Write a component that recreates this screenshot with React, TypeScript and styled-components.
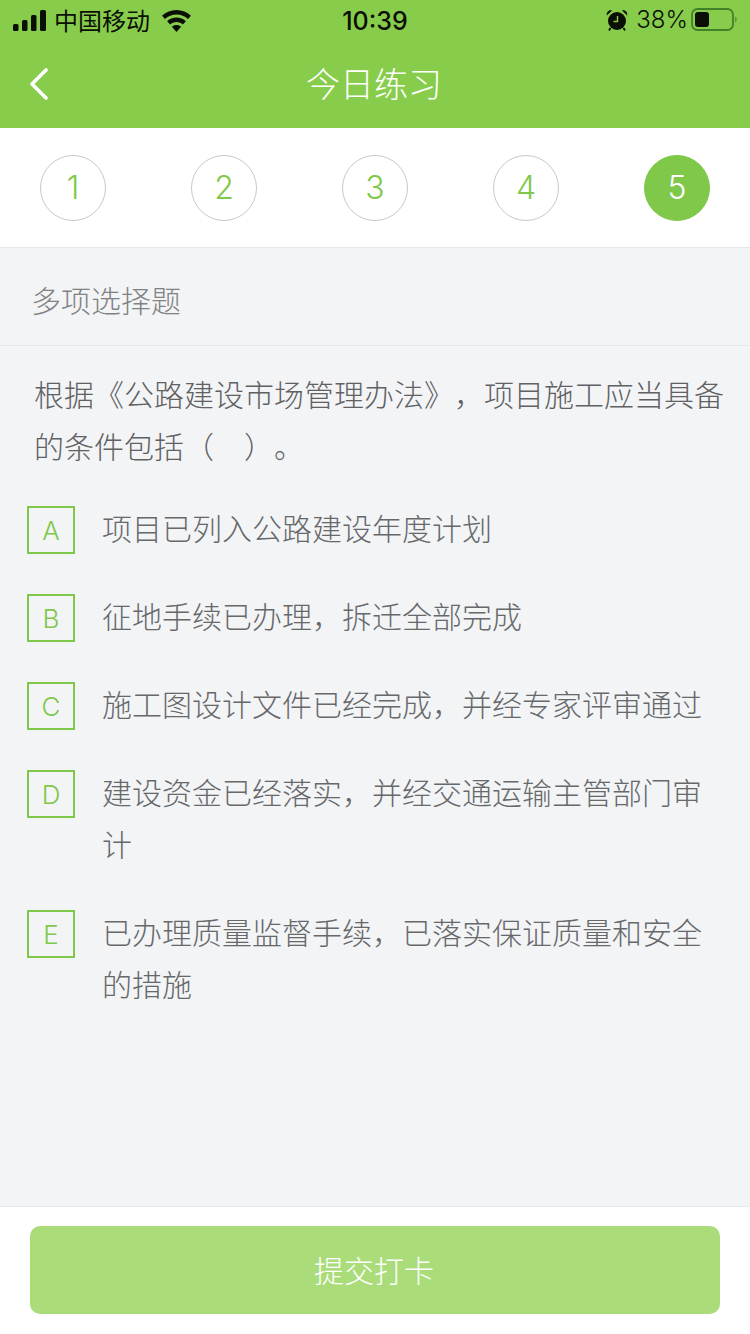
import React from 'react'
import styled, { createGlobalStyle } from 'styled-components'

const GlobalStyle = createGlobalStyle`
  html, body {
    margin: 0;
    padding: 0;
    background: #f3f4f6;
  }
  * {
    box-sizing: border-box;
  }
  body {
    font-family: 'Noto Sans CJK SC', 'Liberation Sans', sans-serif;
    text-spacing-trim: space-all;
  }
`

const Page = styled.div`
  width: 750px;
  height: 1334px;
  display: flex;
  flex-direction: column;
  overflow: hidden;
  background: #f3f4f6;
`

const Header = styled.header`
  background: #87cd4b;
`

const StatusBar = styled.div`
  height: 40px;
  padding: 1px 13px 0;
  display: grid;
  grid-template-columns: 1fr auto 1fr;
  align-items: center;
  color: #0b0f06;
`

const StatusLeft = styled.div`
  display: flex;
  align-items: center;
  gap: 9px;
`

const Carrier = styled.span`
  font-size: 24px;
  line-height: 36px;
  margin: 0 3px 2px -1px;
`

const Time = styled.span`
  font-family: 'Inter', 'Liberation Sans', sans-serif;
  font-size: 25px;
  font-weight: 500;
  line-height: 38px;
`

const StatusRight = styled.div`
  display: flex;
  align-items: center;
  justify-content: flex-end;
  gap: 8px;
  margin-top: -2px;
`

const Battery = styled.span`
  font-family: 'Inter', 'Liberation Sans', sans-serif;
  font-size: 24px;
  font-weight: 300;
  line-height: 38px;
  margin-right: -5px;
`

const NavBar = styled.nav`
  height: 88px;
  padding: 0 28px;
  display: grid;
  grid-template-columns: 1fr auto 1fr;
  align-items: center;
  color: #fff;
`

const BackIcon = styled.svg`
  display: block;
`

const Title = styled.h1`
  margin: 0 0 2px -2px;
  font-size: 34px;
  font-weight: 300;
  line-height: 86px;
`

const Steps = styled.div`
  height: 120px;
  padding: 27px 40px 0;
  display: flex;
  justify-content: space-between;
  align-items: flex-start;
  background: #fff;
  border-bottom: 1px solid #e6e7e9;
`

const Step = styled.div<{ $active?: boolean }>`
  width: 66px;
  height: 66px;
  padding-bottom: 1px;
  border-radius: 50%;
  display: flex;
  align-items: center;
  justify-content: center;
  font-family: 'Inter', 'Liberation Sans', sans-serif;
  font-size: 32px;
  font-weight: 300;
  color: ${(p) => (p.$active ? '#fff' : '#7fc84a')};
  background: ${(p) => (p.$active ? '#7fc84a' : '#fff')};
  border: 1px solid ${(p) => (p.$active ? '#7fc84a' : '#c9c9c9')};
`

const SectionLabel = styled.div`
  height: 98px;
  padding: 4px 31px 0;
  display: flex;
  align-items: center;
  font-size: 30px;
  font-weight: 300;
  color: #808284;
  border-bottom: 1px solid #e6e7e9;
`

const Body = styled.main`
  flex: 1;
  padding: 21px 26px 0 27px;
`

const Question = styled.p`
  margin: 0 -10px 30px 7px;
  font-size: 30px;
  font-weight: 300;
  line-height: 52px;
  color: #5f6163;
`

const Option = styled.div`
  display: flex;
  align-items: flex-start;
  gap: 27px;
  padding-bottom: 36px;
`

const OptionKey = styled.div`
  flex: none;
  width: 48px;
  height: 48px;
  margin-top: 5px;
  margin-bottom: -1px;
  display: flex;
  align-items: center;
  justify-content: center;
  font-family: 'Inter', 'Liberation Sans', sans-serif;
  font-size: 26px;
  font-weight: 300;
  color: #7fc84a;
  border: 2px solid #7fc84a;
`

const OptionText = styled.div`
  font-size: 30px;
  font-weight: 300;
  line-height: 52px;
  color: #66686a;
`

const Footer = styled.footer`
  height: 128px;
  padding: 19px 30px 0;
  background: #fff;
  border-top: 1px solid #e8e9eb;
`

const SubmitButton = styled.button`
  width: 100%;
  height: 88px;
  padding: 0 2px 3px 0;
  border: 0;
  border-radius: 10px;
  background: #aadc7a;
  color: #fff;
  font-family: inherit;
  font-size: 30px;
  font-weight: 300;
`

const options = [
  { key: 'A', text: '项目已列入公路建设年度计划' },
  { key: 'B', text: '征地手续已办理，拆迁全部完成' },
  { key: 'C', text: '施工图设计文件已经完成，并经专家评审通过' },
  { key: 'D', text: '建设资金已经落实，并经交通运输主管部门审计' },
  { key: 'E', text: '已办理质量监督手续，已落实保证质量和安全的措施' },
]

const SignalIcon = () => (
  <svg width="33" height="21" viewBox="0 0 33 21" fill="#0b0f06">
    <rect x="0" y="14" width="5.5" height="7" rx="1.5" />
    <rect x="9" y="10" width="5.5" height="11" rx="1.5" />
    <rect x="18" y="5" width="5.5" height="16" rx="1.5" />
    <rect x="27" y="0" width="6" height="21" rx="1.5" />
  </svg>
)

const WifiIcon = () => (
  <svg width="29" height="22" viewBox="0 0 29 22" fill="#0b0f06">
    <path d="M14.5 0C9 0 4 2.2 0 5.8l3 3.2C6.1 6.2 10.1 4.5 14.5 4.5S22.9 6.2 26 9l3-3.2C25 2.2 20 0 14.5 0z" />
    <path d="M14.5 7.6c-3.6 0-6.9 1.4-9.4 3.6l3 3.2c1.7-1.5 3.9-2.4 6.4-2.4s4.7.9 6.4 2.4l3-3.2c-2.5-2.2-5.8-3.6-9.4-3.6z" />
    <path d="M14.5 15c-1.8 0-3.4.7-4.6 1.7l4.6 5.3 4.6-5.3c-1.2-1-2.8-1.7-4.6-1.7z" />
  </svg>
)

const AlarmIcon = () => (
  <svg width="22" height="22" viewBox="0 0 22 22">
    <circle cx="11" cy="12" r="9" fill="#0b0f06" />
    <path d="M.8 6.5 6 1.6C3.4.2.2 2.8.8 6.5zM21.2 6.5 16 1.6c2.6-1.4 5.8 1.2 5.2 4.9z" fill="#0b0f06" />
    <path d="M4.5 19 3 21.5M17.5 19 19 21.5" stroke="#0b0f06" strokeWidth="1.8" />
    <path d="M11.5 7v5.5H7.5" fill="none" stroke="#87cd4b" strokeWidth="1.4" />
  </svg>
)

const BatteryIcon = () => (
  <svg width="46" height="23" viewBox="0 0 46 23">
    <rect x="1" y="1" width="41" height="21" rx="5.5" fill="none" stroke="#44802a" strokeWidth="1.8" />
    <rect x="4" y="4" width="14" height="15" rx="3" fill="#0b0f06" />
    <path d="M44 8.5c1.2.6 1.8 1.6 1.8 3s-.6 2.4-1.8 3z" fill="#5a9a38" />
  </svg>
)

export default function App() {
  return (
    <Page>
      <GlobalStyle />
      <Header>
        <StatusBar>
          <StatusLeft>
            <SignalIcon />
            <Carrier>中国移动</Carrier>
            <WifiIcon />
          </StatusLeft>
          <Time>10:39</Time>
          <StatusRight>
            <AlarmIcon />
            <Battery>38%</Battery>
            <BatteryIcon />
          </StatusRight>
        </StatusBar>
        <NavBar>
          <BackIcon width="22" height="32" viewBox="0 0 22 32" fill="none">
            <path d="M18 2 4 16l14 14" stroke="#fff" strokeWidth="3.6" strokeLinecap="round" strokeLinejoin="round" />
          </BackIcon>
          <Title>今日练习</Title>
        </NavBar>
      </Header>
      <Steps>
        {[1, 2, 3, 4, 5].map((n) => (
          <Step key={n} $active={n === 5}>
            {n}
          </Step>
        ))}
      </Steps>
      <SectionLabel>多项选择题</SectionLabel>
      <Body>
        <Question>根据《公路建设市场管理办法》，项目施工应当具备的条件包括（　）。</Question>
        {options.map((o) => (
          <Option key={o.key}>
            <OptionKey>{o.key}</OptionKey>
            <OptionText>{o.text}</OptionText>
          </Option>
        ))}
      </Body>
      <Footer>
        <SubmitButton>提交打卡</SubmitButton>
      </Footer>
    </Page>
  )
}
